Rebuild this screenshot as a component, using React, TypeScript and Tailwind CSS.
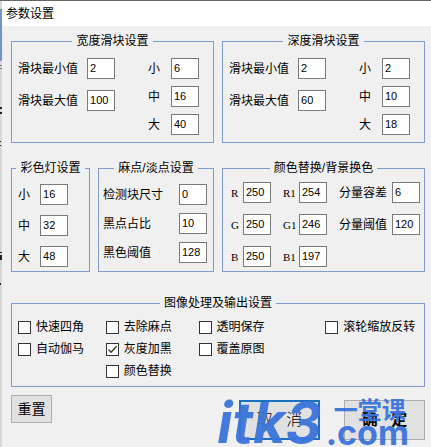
import type { ReactNode } from "react";

function Group({ title, className, children }: { title: string; className: string; children: ReactNode }) {
  return (
    <fieldset className={`min-w-0 border border-[#7f9ccb] ${className}`}>
      <legend className="mx-auto px-1 leading-3">{title}</legend>
      {children}
    </fieldset>
  );
}

function Field({
  label,
  value,
  name,
  className = "",
}: {
  label: string;
  value: number;
  name: string;
  className?: string;
}) {
  return (
    <div className={`flex items-center ${className}`}>
      <label htmlFor={name} className="whitespace-nowrap leading-4">
        {label}
      </label>
      <input
        id={name}
        type="text"
        defaultValue={value}
        className="h-[21px] w-7 border border-[#7a7a7a] bg-white pb-0.5 pl-0.5 font-['Liberation_Sans',sans-serif] text-[11px] leading-4 outline-none"
      />
    </div>
  );
}

function Check({ label, checked = false }: { label: string; checked?: boolean }) {
  return (
    <label className="flex h-[13px] items-center gap-[5px] whitespace-nowrap leading-[13px]">
      <span className="grid">
        <input
          type="checkbox"
          defaultChecked={checked}
          className="peer col-start-1 row-start-1 size-[13px] appearance-none border border-[#333] bg-white"
        />
        <svg
          viewBox="0 0 13 13"
          className="pointer-events-none col-start-1 row-start-1 hidden size-[13px] peer-checked:block"
          fill="none"
          stroke="#333"
          strokeWidth="1.3"
        >
          <path d="M2.5 6.5 5 9.2 10.7 3.3" />
        </svg>
      </span>
      {label}
    </label>
  );
}

function SliderGroup({ title, id, min, max, sizes }: { title: string; id: string; min: number; max: number; sizes: number[] }) {
  return (
    <Group title={title} className="pb-[7px]">
      <div className="flex justify-between pt-[11px] pr-3.5 pl-1.5">
        <div className="flex flex-col gap-[11px]">
          <Field name={`${id}-min`} label="滑块最小值" value={min} className="gap-[9px]" />
          <Field name={`${id}-max`} label="滑块最大值" value={max} className="gap-[9px]" />
        </div>
        <div className="flex flex-col gap-[7px]">
          {["小", "中", "大"].map((label, i) => (
            <Field key={label} name={`${id}-${i}`} label={label} value={sizes[i]} className="gap-[11px]" />
          ))}
        </div>
      </div>
    </Group>
  );
}

export default function App() {
  return (
    <div className="flex min-h-screen border-t border-[#666] bg-[#f0f0f0] font-['Liberation_Sans','Noto_Sans_CJK_SC',sans-serif] text-xs text-black">
      {/* sliver of the parent window */}
      <div className="w-0.5 shrink-0 bg-[#d8d8d8]">
        <svg width="2" height="300" aria-hidden="true">
          <rect y="8" width="2" height="52" fill="#6f93cf" />
          <rect y="64" width="2" height="1" fill="#777" />
          <rect y="67" width="2" height="1" fill="#777" />
          <path d="M0 106h2v2H0zM0 111h2v2H0zM0 140h1v1H0zM0 144h1v1H0zM0 251h2v1H0zM0 254h2v5H0zM0 282h1v2H0z" fill="#222" />
        </svg>
      </div>

      <div className="min-w-0 flex-1">
        <header className="flex h-[25px] items-center bg-white pl-1">
          <h1>参数设置</h1>
        </header>

        <main className="pt-[9px] pr-1.5 pl-[9px]">
          <div className="grid grid-cols-2 gap-2">
            <SliderGroup title="宽度滑块设置" id="width" min={2} max={100} sizes={[6, 16, 40]} />
            <SliderGroup title="深度滑块设置" id="depth" min={2} max={60} sizes={[2, 10, 18]} />
          </div>

          <div className="mt-[19px] grid grid-cols-[79fr_116fr_203fr] gap-2">
            <Group title="彩色灯设置" className="pb-1">
              <div className="flex flex-col gap-2.5 pt-2.5 pl-1.5">
                <Field name="lamp-s" label="小" value={16} className="gap-2.5" />
                <Field name="lamp-m" label="中" value={32} className="gap-2.5" />
                <Field name="lamp-l" label="大" value={48} className="gap-2.5" />
              </div>
            </Group>

            <Group title="麻点/淡点设置" className="pb-1">
              <div className="flex flex-col gap-2 pt-2.5 pr-1.5 pl-1">
                <Field name="spot-size" label="检测块尺寸" value={0} className="justify-between" />
                <Field name="spot-ratio" label="黑点占比" value={10} className="justify-between" />
                <Field name="spot-black" label="黑色阈值" value={128} className="justify-between" />
              </div>
            </Group>

            <Group title="颜色替换/背景换色" className="pb-1">
              <div className="flex justify-between pt-2 pr-1 pl-2">
                <div className="flex w-10 flex-col gap-[11px] font-['Liberation_Serif',serif] text-[11px]">
                  <Field name="r" label="R" value={250} className="justify-between" />
                  <Field name="g" label="G" value={250} className="justify-between" />
                  <Field name="b" label="B" value={250} className="justify-between" />
                </div>
                <div className="flex w-11 flex-col gap-[11px] font-['Liberation_Serif',serif] text-[11px]">
                  <Field name="r1" label="R1" value={254} className="justify-between" />
                  <Field name="g1" label="G1" value={246} className="justify-between" />
                  <Field name="b1" label="B1" value={197} className="justify-between" />
                </div>
                <div className="flex flex-col gap-[11px]">
                  <Field name="tolerance" label="分量容差" value={6} className="gap-[5px]" />
                  <Field name="threshold" label="分量阈值" value={120} className="gap-[5px]" />
                </div>
              </div>
            </Group>
          </div>

          <Group title="图像处理及输出设置" className="mt-[25px] pb-2">
            <div className="grid grid-cols-[88fr_93fr_127fr_99fr] gap-y-[9px] pt-3 pl-1.5">
              <Check label="快速四角" />
              <Check label="去除麻点" />
              <Check label="透明保存" />
              <Check label="滚轮缩放反转" />
              <Check label="自动伽马" />
              <Check label="灰度加黑" checked />
              <Check label="覆盖原图" />
              <span />
              <span />
              <Check label="颜色替换" />
            </div>
          </Group>

          <footer className="relative mt-2 flex items-start">
            <button type="button" className="h-7 w-[41px] border border-[#adadad] bg-[#e1e1e1] text-sm leading-5">
              重置
            </button>
            <button
              type="button"
              className="mt-[5px] ml-auto h-10 w-[81px] border-2 border-[#1a6fc0] bg-[#e1e1e1] text-base font-light whitespace-pre"
            >
              {"取   消"}
            </button>
            <button
              type="button"
              className="mt-[5px] ml-6 h-10 w-[81px] border border-[#adadad] bg-[#e1e1e1] text-base font-bold whitespace-pre"
            >
              {"确   定"}
            </button>
            {/* watermark over the buttons */}
            <div
              aria-hidden="true"
              className="pointer-events-none absolute top-1 right-4 flex gap-1 font-['Inter','Noto_Sans_CJK_SC',sans-serif] font-bold whitespace-nowrap text-[#3c74dc] opacity-95"
            >
              <span className="text-[56px] leading-[48px] italic">itk3</span>
              <span className="flex flex-col">
                <span className="pl-2 text-2xl leading-6">一堂课</span>
                <span className="text-[34px] leading-5">.com</span>
              </span>
            </div>
          </footer>
        </main>
      </div>
    </div>
  );
}
